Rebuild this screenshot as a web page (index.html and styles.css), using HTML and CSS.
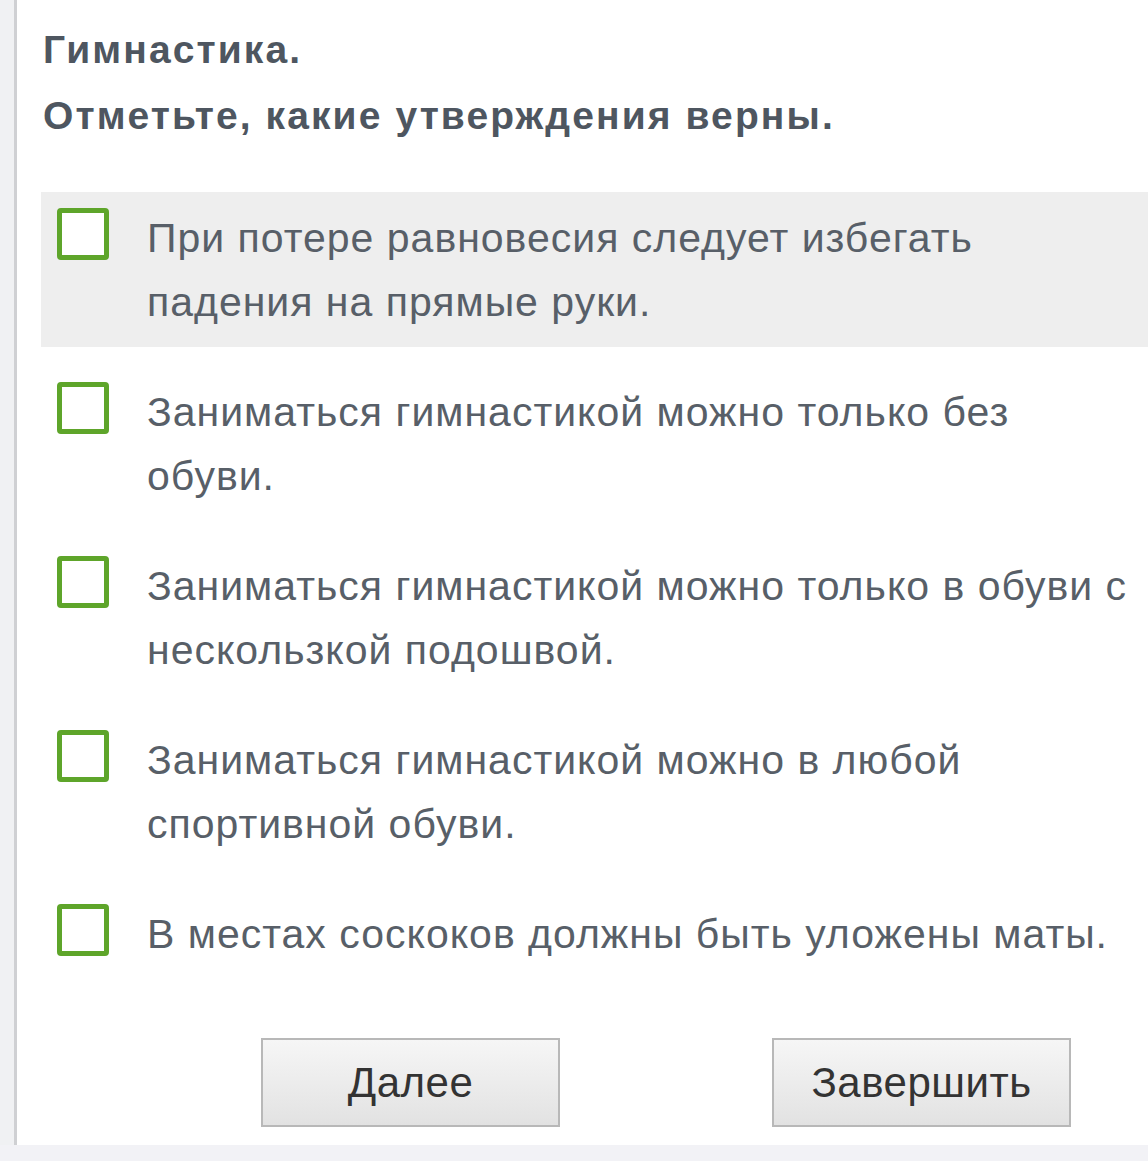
FILE: index.html
```html
<!DOCTYPE html>
<html lang="ru">
<head>
<meta charset="utf-8">
<link rel="stylesheet" href="styles.css">
</head>
<body>
<div class="page">
  <div class="side"></div>
  <main class="main">
    <h1 class="title">Гимнастика.<br>Отметьте, какие утверждения верны.</h1>
    <ul class="options">
      <li class="option active"><span class="box"></span><span class="label">При потере равновесия следует избегать падения на прямые руки.</span></li>
      <li class="option"><span class="box"></span><span class="label">Заниматься гимнастикой можно только без обуви.</span></li>
      <li class="option"><span class="box"></span><span class="label">Заниматься гимнастикой можно только в обуви с нескользкой подошвой.</span></li>
      <li class="option"><span class="box"></span><span class="label">Заниматься гимнастикой можно в любой спортивной обуви.</span></li>
      <li class="option"><span class="box"></span><span class="label">В местах соскоков должны быть уложены маты.</span></li>
    </ul>
    <div class="actions">
      <button class="btn">Далее</button>
      <button class="btn">Завершить</button>
    </div>
  </main>
</div>
<div class="footer"></div>
</body>
</html>
```

FILE: styles.css
```css
html, body {
  margin: 0;
  padding: 0;
  background: #ffffff;
  font-family: "Liberation Sans", Arial, sans-serif;
  overflow: hidden;
}
.page {
  display: flex;
  height: 1145px;
}
.side {
  width: 14px;
  flex: none;
  background: #f0f1f3;
  border-right: 3px solid #cfd0d3;
}
.main {
  flex: 1;
  padding-left: 24px;
  min-width: 0;
}
.title {
  margin: 17px 0 0 2px;
  font-size: 39px;
  line-height: 66px;
  letter-spacing: 2.1px;
  font-weight: bold;
  color: #4e5660;
}
.options {
  list-style: none;
  margin: 43px 0 0 0;
  padding: 0;
}
.option {
  display: flex;
  align-items: flex-start;
  padding: 14px 0 13px 16px;
  margin-bottom: 19px;
}
.option:last-child {
  margin-bottom: 0;
}
.option.active {
  background: #eeeeee;
}
.box {
  flex: none;
  width: 42px;
  height: 42px;
  border: 5px solid #5ea52a;
  border-radius: 4px;
  background: #fff;
  margin-top: 2px;
}
.label {
  margin-left: 38px;
  padding-right: 6px;
  font-size: 41px;
  line-height: 64px;
  letter-spacing: 1px;
  color: #585f68;
}
.actions {
  display: flex;
  gap: 212px;
  padding-left: 220px;
  margin-top: 59px;
}
.btn {
  width: 299px;
  height: 89px;
  border: 2px solid #b8b8b8;
  background: linear-gradient(#f6f6f6, #e2e2e2);
  font-family: "Liberation Sans", Arial, sans-serif;
  font-size: 42px;
  letter-spacing: 0.5px;
  color: #333333;
  padding: 0;
}
.footer {
  height: 16px;
  background: #f2f2f6;
}
```
